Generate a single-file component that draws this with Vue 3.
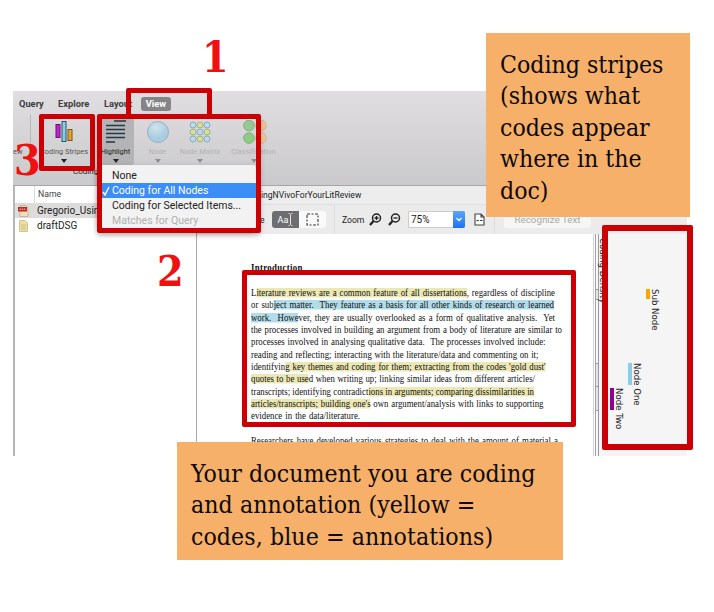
<script setup>
const lines = [
  { w: 304, parts: [['L'], ['iterature reviews are a common feature of all dissertations', 'y'], [', regardless of discipline']] },
  { w: 303, parts: [['or sub'], ['ject matter.\u00a0 They feature as a basis for all other kinds of research or learned', 'b']] },
  { w: 304, parts: [['work.\u00a0 Howe', 'b'], ['ver, they are usually overlooked as a form of qualitative analysis.\u00a0 Yet']] },
  { w: 311, parts: [['the processes involved in building an argument from a body of literature are similar to']] },
  { w: 294.5, parts: [['processes involved in analysing qualitative data.\u00a0 The processes involved include:']] },
  { w: 287.5, parts: [['reading and reflecting; interacting with the literature/data and commenting on it;']] },
  { w: 294.5, parts: [['identifyin'], ["g key themes and coding for them; extracting from the codes 'gold dust'", 'y']] },
  { w: 284, parts: [['quotes to be use', 'y'], ['d when writing up; linking similar ideas from different articles/']] },
  { w: 283, parts: [['transcripts; identifying contradict'], ['ions in arguments; comparing dissimilarities in', 'y']] },
  { w: 292.5, parts: [["articles/transcripts; building one's", 'y'], [' own argument/analysis with links to supporting']] },
  { w: 109, parts: [['evidence in the data/literature.']] },
  { w: 0, parts: [] },
  { w: 307, parts: [['Researchers have developed various strategies to deal with the amount of material a']] },
]
const squeeze = 0.8
const lanes = [
  { name: 'Node Two', top: 154, size: 22, color: '#900090' },
  { name: 'Node One', top: 129, size: 22, color: '#87ceeb' },
  { name: 'Sub Node', top: 55, size: 10, color: '#ffa500' },
]
const matrix = [0, 1, 2, 3, 4, 5, 6, 7, 8]
const menu = ['None', 'Coding for All Nodes', 'Coding for Selected Items...', 'Matches for Query']
</script>

<template>
  <div class="stage">
    <div class="window">
      <header class="ribbon">
        <nav class="tabs">
          <span class="t-query">Query</span><span class="t-explore">Explore</span><span class="t-layout">Layout</span><span class="active">View</span>
        </nav>
        <div class="tools">
          <div class="tool view-end"><span class="label">ew</span></div>
          <div class="tool stripes">
            <svg width="20" height="24" viewBox="0 0 20 24">
              <rect x="2" y="4.5" width="4" height="13" fill="#c41fd0" stroke="#5c1b6c" />
              <rect x="8" y="1.5" width="4" height="20" fill="#87cfe8" stroke="#2c5367" />
              <rect x="14" y="9.5" width="4" height="11" fill="#e3a52c" stroke="#775719" />
            </svg>
            <span class="label">Coding Stripes</span><i class="arrow"></i>
          </div>
          <div class="tool highlight">
            <svg width="20" height="24" viewBox="0 0 20 24">
              <path d="M8 1H20M0 5.5H19M0 9.5H19M0 13.5H19M0 17.5H19M0 22H9" stroke="#243847" stroke-width="1.7" />
            </svg>
            <span class="label">Highlight</span><i class="arrow"></i>
          </div>
          <div class="tool node faded">
            <svg width="24" height="24" viewBox="0 0 24 24">
              <defs>
                <radialGradient id="orb" cx=".4" cy=".3"><stop offset="0" stop-color="#cfe9f5" /><stop offset="1" stop-color="#9bcbe4" /></radialGradient>
              </defs>
              <circle cx="12" cy="12" r="10.5" fill="url(#orb)" stroke="#7fa9bf" />
            </svg>
            <span class="label">Node</span><i class="arrow"></i>
          </div>
          <div class="tool matrix faded">
            <svg width="24" height="24" viewBox="0 0 24 24">
              <circle v-for="m in matrix" :key="m" :cx="5 + (m % 3) * 7" :cy="5 + Math.floor(m / 3) * 7" r="3"
                :fill="m % 2 ? '#d4e58c' : '#b4dcee'" :stroke="m % 2 ? '#8ea65c' : '#6d9fb9'" />
            </svg>
            <span class="label">Node Matrix</span><i class="arrow"></i>
          </div>
          <div class="tool classify faded">
            <svg width="26" height="24" viewBox="0 0 26 24">
              <circle cx="8" cy="5.5" r="5.3" fill="#7ac77b" stroke="#68a269" /><circle cx="20" cy="5.5" r="5.3" fill="#f2bf88" stroke="#d8aa79" />
              <circle cx="8" cy="18" r="5.3" fill="#73cb66" stroke="#68a269" /><circle cx="20" cy="18" r="5.3" fill="#f2c888" stroke="#d8aa79" />
            </svg>
            <span class="label">Classification</span><i class="arrow"></i>
          </div>
        </div>
        <div class="group">Coding</div>
      </header>

      <div class="body">
        <aside class="list">
          <div class="list-head"><span>Name</span></div>
          <div class="file selected">
            <svg width="11" height="12" viewBox="0 0 11 12">
              <path d="M2 .5H8L10 3V11.5H2Z" fill="#f2dfc0" stroke="#c9aa7f" stroke-width=".8" /><rect y="2" width="9" height="4.5" fill="#b92a1c" />
              <path d="M1.5 4.2H7.5" stroke="#f4d8d2" stroke-dasharray="1.5 .7" />
            </svg>
            <span>Gregorio_UsingNVivo</span>
          </div>
          <div class="file">
            <svg width="11" height="12" viewBox="0 0 11 12">
              <path d="M1.5 .5H7L9.5 3V11.5H1.5Z" fill="#eee0a2" stroke="#c8b97c" stroke-width=".8" /><path d="M3 5H8M3 7H8M3 9H8" stroke="#c3b477" stroke-width=".7" />
            </svg>
            <span>draftDSG</span>
          </div>
        </aside>

        <main class="detail">
          <div class="title">ingNVivoForYourLitReview</div>
          <div class="bar">
            <span class="mode">e</span>
            <div class="segment">
              <span class="seg-on">Aa<svg width="5" height="13" viewBox="0 0 5 13"><path d="M.5 .5H1.5L2.5 1.5L3.5 .5H4.5M2.5 1.5V11.5M.5 12.5H1.5L2.5 11.5L3.5 12.5H4.5" fill="none" stroke="#fff" stroke-width=".8" /></svg></span>
              <span class="seg-off"><svg width="13" height="13" viewBox="0 0 13 13"><rect x="1" y="1" width="11" height="11" fill="none" stroke="#333" stroke-width="1.1" stroke-dasharray="3 1.5 2 1.5" /></svg></span>
            </div>
            <i class="sep"></i>
            <span class="zoom">Zoom</span>
            <svg class="lens" width="13" height="13" viewBox="0 0 13 13"><circle cx="7.5" cy="5" r="4" fill="none" stroke="#222" stroke-width="1.5" /><path d="M4.5 8L1 12" stroke="#222" stroke-width="2.2" /><path d="M5.5 5H9.5M7.5 3V7" stroke="#222" stroke-width="1.3" /></svg>
            <svg class="lens" width="13" height="13" viewBox="0 0 13 13"><circle cx="7.5" cy="5" r="4" fill="none" stroke="#222" stroke-width="1.5" /><path d="M4.5 8L1 12" stroke="#222" stroke-width="2.2" /><path d="M5.5 5H9.5" stroke="#222" stroke-width="1.3" /></svg>
            <div class="select"><span>75%</span><b><svg width="8" height="5" viewBox="0 0 8 5"><path d="M1.5 1L4 3.5L6.5 1" fill="none" stroke="#fff" stroke-width="1.3" /></svg></b></div>
            <svg class="fit" width="11" height="13" viewBox="0 0 11 13"><path d="M1 12V1H7L10 4V12ZM7 1V4H10" fill="#fafafa" stroke="#444" stroke-width="1.1" /><path d="M2.5 7.5H8.5" stroke="#333" stroke-dasharray="2.4 1.2" stroke-width="1.2" /></svg>
            <i class="sep sep2"></i>
            <span class="recognize">Recognize Text</span>
          </div>
          <div class="content">
            <article class="doc">
              <div class="page">
                <h4>Introduction</h4>
                <p v-for="(l, i) in lines" :key="i" :style="{ width: l.w / squeeze + 'px' }"><span v-for="(p, j) in l.parts" :key="j" :class="p[1]">{{ p[0] }}</span></p>
              </div>
            </article>
            <div class="ruler"><i class="r1"></i><i class="r2"></i><i class="r3"></i></div>
            <section class="density">
              <span class="vert head">Coding Density</span>
              <div v-for="l in lanes" :key="l.name" class="lane" :style="{ paddingTop: l.top + 'px' }">
                <i :style="{ height: l.size + 'px', background: l.color }"></i><span class="vert">{{ l.name }}</span>
              </div>
            </section>
          </div>
        </main>
      </div>
    </div>

    <div class="menu">
      <div v-for="(m, i) in menu" :key="m" class="item" :class="{ on: i === 1, off: i === 3 }">
        <svg v-if="i === 1" width="8" height="10" viewBox="0 0 8 10"><path d="M1 6L3 9L7 1" fill="none" stroke="#fff" stroke-width="1.4" /></svg>{{ m }}
      </div>
    </div>

    <div class="frame f-view"></div>
    <div class="frame f-stripes"></div>
    <div class="frame f-menu"></div>
    <div class="frame f-doc"></div>
    <div class="frame f-codes"></div>
    <b class="num n1">1</b><b class="num n2">2</b><b class="num n3">3</b>
    <div class="note note-codes">Coding stripes<br>(shows what<br>codes appear<br>where in the<br>doc)</div>
    <div class="note note-doc">Your document you are coding<br>and annotation (yellow =<br>codes, blue = annotations)</div>
  </div>
</template>

<style>
body { background: #fff; }
</style>

<style scoped>
.stage { position: relative; width: 714px; height: 612px; box-sizing: border-box; padding: 91px 0 0 13px; overflow: hidden; font-family: Roboto, "Liberation Sans", sans-serif; color: #222; }
.stage * { box-sizing: border-box; }
.window { width: 674px; height: 365px; overflow: hidden; display: flex; flex-direction: column; }
.ribbon { height: 95px; flex: none; background: linear-gradient(#e0dee0, #cac9cb); border-bottom: 1px solid #a6a6a8; overflow: hidden; }
.tabs { display: flex; height: 24px; padding: 5px 0 0 6px; font-size: 9.3px; font-weight: 700; line-height: 15px; color: #3c3c3e; }
.t-query { width: 39px; } .t-explore { width: 46px; } .t-layout { width: 37px; }
.active { width: 30px; height: 14px; line-height: 14px; text-align: center; color: #fff; background: #858587; border-radius: 3px; margin-top: 1px; }
.tools { display: flex; height: 50px; }
.tool { display: flex; flex-direction: column; align-items: center; padding-top: 5px; height: 50px; flex: none; white-space: nowrap; }
.label { font-size: 7.4px; line-height: 10px; height: 13px; padding-top: 3px; color: #555; }
.tool svg { height: 24px; flex: none; }
.arrow { border: 3px solid transparent; border-top: 4px solid #222; border-bottom: 0; margin-top: 2px; }
.faded .label { color: #b3b2b4; }
.faded svg { opacity: .75; }
.faded .arrow { border-top-color: #8d8d8f; }
.view-end { width: 18px; padding-top: 29px; border-right: 1px solid #b9b8ba; align-items: flex-start; }
.stripes { width: 66px; }
.highlight { width: 37px; background: #b4b3b5; border-radius: 0 0 3px 0; }
.highlight .label { color: #222; }
.node { width: 47px; } .matrix { width: 38px; } .classify { width: 69px; }
.group { font-size: 8px; line-height: 10px; padding: 2px 0 0 60px; }
.body { display: flex; flex: 1; min-height: 0; }
.list { width: 184px; flex: none; border-left: 2px solid #b6b6b8; border-right: 1px solid #aaa; background: #fff; }
.list-head { height: 17px; padding-left: 19px; font-size: 8.7px; line-height: 17px; color: #444; display: flex; }
.list-head span { border-left: 1px solid #ddd; padding-left: 3px; }
.file { display: flex; align-items: center; height: 15px; padding-left: 3px; gap: 8px; font-size: 10px; white-space: nowrap; overflow: hidden; }
.selected { background: #dcdcdc; }
.detail { flex: 1; min-width: 0; display: flex; flex-direction: column; }
.title { height: 19px; background: #ededed; border-bottom: 1px solid #dedede; padding-left: 64px; font-size: 8.55px; line-height: 19px; }
.bar { height: 29px; background: #ebebeb; display: flex; align-items: center; font-size: 8.6px; }
.mode { width: 12px; margin-left: 63px; flex: none; }
.segment { display: flex; width: 54px; height: 17px; border-radius: 3px; overflow: hidden; background: #fafafa; flex: none; }
.segment span { width: 27px; display: flex; align-items: center; justify-content: center; }
.segment .seg-on { background: #6e6e70; color: #fff; font-size: 9px; }
.sep { width: 1px; height: 27px; background: #dcdcdc; margin-left: 8px; flex: none; }
.zoom { width: 27px; margin-left: 7px; flex: none; }
.lens { margin-right: 6px; flex: none; }
.select { display: flex; width: 57px; height: 17px; background: #fff; border: 1px solid #ccc; margin-left: 1px; font-size: 10px; line-height: 16px; flex: none; }
.select span { flex: 1; padding-left: 2px; }
.select b { width: 12px; margin: -1px; height: 17px; background: linear-gradient(#5ba6f8, #1b73f0); border-radius: 0 2px 2px 0; display: flex; align-items: center; justify-content: center; }
.fit { margin-left: 9px; flex: none; }
.sep2 { margin-left: 9px; }
.recognize { width: 87px; height: 17px; margin-left: 9px; line-height: 17px; text-align: center; background: #f6f6f6; border-radius: 2px; color: #aaa; font-size: 9.8px; flex: none; }
.content { flex: 1; display: flex; min-height: 0; background: #fff; }
.doc { width: 396px; flex: none; overflow: hidden; padding: 27px 0 0 54px; }
.page { width: 420px; transform: scaleX(.8); transform-origin: 0 0; font: 11px/12.33px "Liberation Serif", serif; color: #111; }
.page h4 { margin: 0 0 12.6px; font-size: 11px; line-height: 12.33px; letter-spacing: .4px; }
.page p { margin: 0; height: 12.33px; text-align: justify; text-align-last: justify; }
.y { background: linear-gradient(#ece8b4, #ece8b4) 0 2px / 100% 9.5px no-repeat; }
.b { background: linear-gradient(#b3dcea, #b3dcea) 0 2px / 100% 9.5px no-repeat; }
.ruler { width: 6px; flex: none; padding-left: 2px; display: flex; flex-direction: column; border-left: 1px solid #d4d4d8; border-right: 1px solid #9999a3; background: linear-gradient(90deg, transparent 1px, #a2a2ac 1px, #a2a2ac 2px, #f7f7f9 2px); }
.ruler i { border: 1px solid #9999a3; border-width: 1px 0; background: #e6e6ea; flex: none; }
.r1 { margin-top: 55px; height: 11px; } .r2 { margin-top: 63px; height: 24px; } .r3 { margin-top: -1px; height: 25px; }
.density { flex: 1; background: #f5f5f5; display: flex; font-family: "DejaVu Sans", sans-serif; font-size: 8.6px; }
.vert { writing-mode: vertical-rl; line-height: 10px; white-space: nowrap; }
.head { width: 10px; padding-top: 4px; margin-left: -1px; margin-right: 2px; }
.lane { width: 18px; display: flex; align-items: flex-start; }
.lane i { width: 4px; flex: none; }
.menu { position: absolute; left: 98px; top: 165px; width: 158px; height: 64px; background: #f2f2f2; border-radius: 0 3px 3px 3px; box-shadow: 0 3px 6px rgba(0, 0, 0, .35); padding-top: 3px; font-size: 10.5px; }
.item { display: flex; align-items: center; height: 15px; padding-left: 14px; white-space: nowrap; }
.on { background: #3b8df7; color: #fff; padding-left: 3.5px; gap: 2.5px; }
.off { color: #b0b0b0; }
.frame { position: absolute; border: 5.6px solid #cb0004; border-radius: 2px; }
.f-view { left: 126px; top: 88px; width: 86px; height: 31px; }
.f-stripes { left: 39px; top: 114px; width: 56px; height: 57px; }
.f-menu { left: 97px; top: 114px; width: 164px; height: 119px; box-shadow: 0 3px 5px rgba(0, 0, 0, .18); }
.f-doc { left: 242px; top: 270px; width: 334px; height: 157px; }
.f-codes { left: 602px; top: 225px; width: 91px; height: 225px; border-width: 6px; }
.num { position: absolute; font: 700 42.5px/42.5px "DejaVu Serif Condensed", "DejaVu Serif", serif; color: #ed1111; }
.n1 { left: 202px; top: 36px; } .n2 { left: 157px; top: 250px; } .n3 { left: 14px; top: 139px; }
.note { position: absolute; background: #f6b06a; color: #0d0905; font: 24.6px/31.4px "DejaVu Serif Condensed", "DejaVu Serif", serif; white-space: nowrap; }
.note-codes { left: 486px; top: 33px; width: 204px; height: 184px; padding: 16px 0 0 14px; }
.note-doc { left: 177px; top: 442px; width: 386px; height: 118px; padding: 15.8px 0 0 14px; letter-spacing: .08px; }
</style>
